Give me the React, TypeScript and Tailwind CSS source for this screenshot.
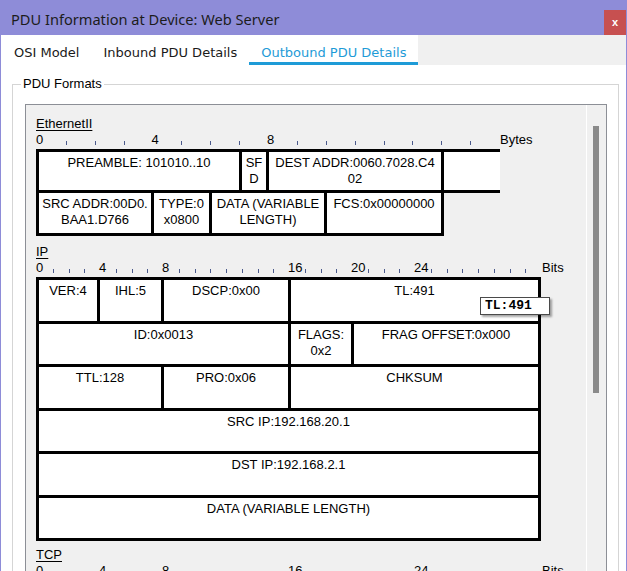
import React from 'react';
import clsx from 'clsx';

const Tick: React.FC = () => <div className="w-px h-[4px] ml-[1px] mb-[3px] bg-[#4b5a8c]" />;

interface RulerProps {
  units: number;
  unitClass: string;
  labels: number[];
  unit: string;
}

const Ruler: React.FC<RulerProps> = ({ units, unitClass, labels, unit }) => (
  <div className="flex h-[16px] leading-[16px] whitespace-nowrap">
    {Array.from({ length: units }).map((_, i) => (
      <div key={i} className={clsx(unitClass, 'h-full shrink-0 flex items-end')}>
        {labels.includes(i) ? <span className="leading-[16px]">{i}</span> : <Tick />}
      </div>
    ))}
    <span className="ml-[2px]">{unit}</span>
  </div>
);

interface CellProps {
  w?: string;
  first?: boolean;
  children?: React.ReactNode;
}

const Cell: React.FC<CellProps> = ({ w, first, children }) => (
  <div
    className={clsx(
      w ?? 'flex-1',
      'shrink-0 h-full bg-white text-center pt-[3px] leading-[16px] whitespace-nowrap',
      !first && 'border-l-[3px] border-black'
    )}
  >
    {children}
  </div>
);

const SectionLabel: React.FC<{ children: React.ReactNode }> = ({ children }) => (
  <div className="leading-[16px] h-[16px]">
    <span className="underline underline-offset-[2px]">{children}</span>
  </div>
);

const EthernetTable: React.FC = () => (
  <div>
    <div className="flex w-[464px] h-[44px] border-t-[3px] border-b-[3px] border-l-[3px] border-black">
      <Cell w="w-[200px]" first>PREAMBLE: 101010..10</Cell>
      <Cell w="w-[27px]">SF<br />D</Cell>
      <Cell w="w-[175px]">DEST ADDR:0060.7028.C4<br />02</Cell>
      <Cell />
    </div>
    <div className="flex w-[408px] h-[43px] border-l-[3px] border-r-[3px] border-b-[3px] border-black">
      <Cell w="w-[112px]" first>SRC ADDR:00D0.<br />BAA1.D766</Cell>
      <Cell w="w-[58px]">TYPE:0<br />x0800</Cell>
      <Cell w="w-[115px]">DATA (VARIABLE<br />LENGTH)</Cell>
      <Cell>FCS:0x00000000</Cell>
    </div>
  </div>
);

const IpTable: React.FC = () => (
  <div className="relative w-[505px] border-[3px] border-black">
    <div className="flex h-[44px] border-b-[3px] border-black">
      <Cell w="w-[58px]" first>VER:4</Cell>
      <Cell w="w-[64px]">IHL:5</Cell>
      <Cell w="w-[127px]">DSCP:0x00</Cell>
      <Cell>TL:491</Cell>
    </div>
    <div className="flex h-[43px] border-b-[3px] border-black">
      <Cell w="w-[249px]" first>ID:0x0013</Cell>
      <Cell w="w-[63px]">FLAGS:<br />0x2</Cell>
      <Cell>FRAG OFFSET:0x000</Cell>
    </div>
    <div className="flex h-[44px] border-b-[3px] border-black">
      <Cell w="w-[122px]" first>TTL:128</Cell>
      <Cell w="w-[127px]">PRO:0x06</Cell>
      <Cell>CHKSUM</Cell>
    </div>
    <div className="flex h-[43px] border-b-[3px] border-black">
      <Cell first>SRC IP:192.168.20.1</Cell>
    </div>
    <div className="flex h-[44px] border-b-[3px] border-black">
      <Cell first>DST IP:192.168.2.1</Cell>
    </div>
    <div className="flex h-[40px]">
      <Cell first>DATA (VARIABLE LENGTH)</Cell>
    </div>

    <div className="absolute left-[441px] top-[17px] w-[70px] h-[18px] bg-white border border-[#4a4a4a] shadow-[2px_2px_2px_rgba(0,0,0,0.35)] pl-[4px] font-['Liberation_Mono',monospace] font-bold text-[13px] leading-[16px] text-black">
      TL:491
    </div>
  </div>
);

const App: React.FC = () => {
  return (
    <div className="w-[627px] h-[571px] overflow-hidden bg-white border-x border-[#8e8cd8] flex flex-col">
      {/* title bar */}
      <div className="h-[35px] shrink-0 bg-[#8e8cd8] flex items-start justify-between">
        <span className="pl-[10px] pt-[9px] font-['Noto_Sans',sans-serif] text-[14.6px] leading-[20px] text-[#1c1c1c]">
          PDU Information at Device: Web Server
        </span>
        <div className="mt-[10px] w-[22px] h-[25px] bg-[#c75050] flex items-center justify-center text-white text-[11px] font-['Liberation_Sans',sans-serif] font-bold">
          x
        </div>
      </div>

      {/* tabs */}
      <div className="h-[30px] shrink-0 flex font-['DejaVu_Sans',sans-serif] text-[13px] leading-[15px]">
        <div className="flex bg-white pl-[1px]">
          <div className="px-[12px] pt-[10px] border-b-[3px] border-transparent text-[#1a1a1a]">OSI Model</div>
          <div className="px-[12px] pt-[10px] border-b-[3px] border-transparent text-[#1a1a1a]">Inbound PDU Details</div>
          <div className="px-[12px] pt-[10px] border-b-[3px] border-[#1e9bd7] text-[#1e9bd7]">Outbound PDU Details</div>
        </div>
        <div className="flex-1 bg-[#f0f0f0]" />
      </div>

      {/* group box */}
      <fieldset className="ml-[11px] mr-[7px] mt-[11px] min-w-0 border border-[#d5d5d5] pl-[8px] pr-[11px] font-['Liberation_Sans',Arial,sans-serif] text-[13px] text-black">
        <legend className="px-[2px] leading-[16px]">PDU Formats</legend>

        <div className="ml-[4px] mt-[12px] h-[480px] flex border border-[#8c8f96] bg-[#f0f0f0]">
          <div className="flex-1 pl-[10px] pt-[11px]">
            <SectionLabel>EthernetII</SectionLabel>
            <Ruler units={16} unitClass="w-[28.875px]" labels={[0, 4, 8]} unit="Bytes" />
            <div className="mt-[1px]">
              <EthernetTable />
            </div>

            <div className="mt-[8px]">
              <SectionLabel>IP</SectionLabel>
            </div>
            <Ruler units={32} unitClass="w-[15.75px]" labels={[0, 4, 8, 16, 20, 24]} unit="Bits" />
            <div className="mt-[1px]">
              <IpTable />
            </div>

            <div className="mt-[6px]">
              <SectionLabel>TCP</SectionLabel>
            </div>
            <Ruler units={32} unitClass="w-[15.75px]" labels={[0, 4, 8, 16, 24]} unit="Bits" />
          </div>

          {/* scrollbar */}
          <div className="w-[20px] shrink-0 border-l border-white">
            <div className="ml-[6px] mt-[21px] w-[6px] h-[267px] bg-[#8a8a8a]" />
          </div>
        </div>
      </fieldset>
    </div>
  );
};

export default App;
